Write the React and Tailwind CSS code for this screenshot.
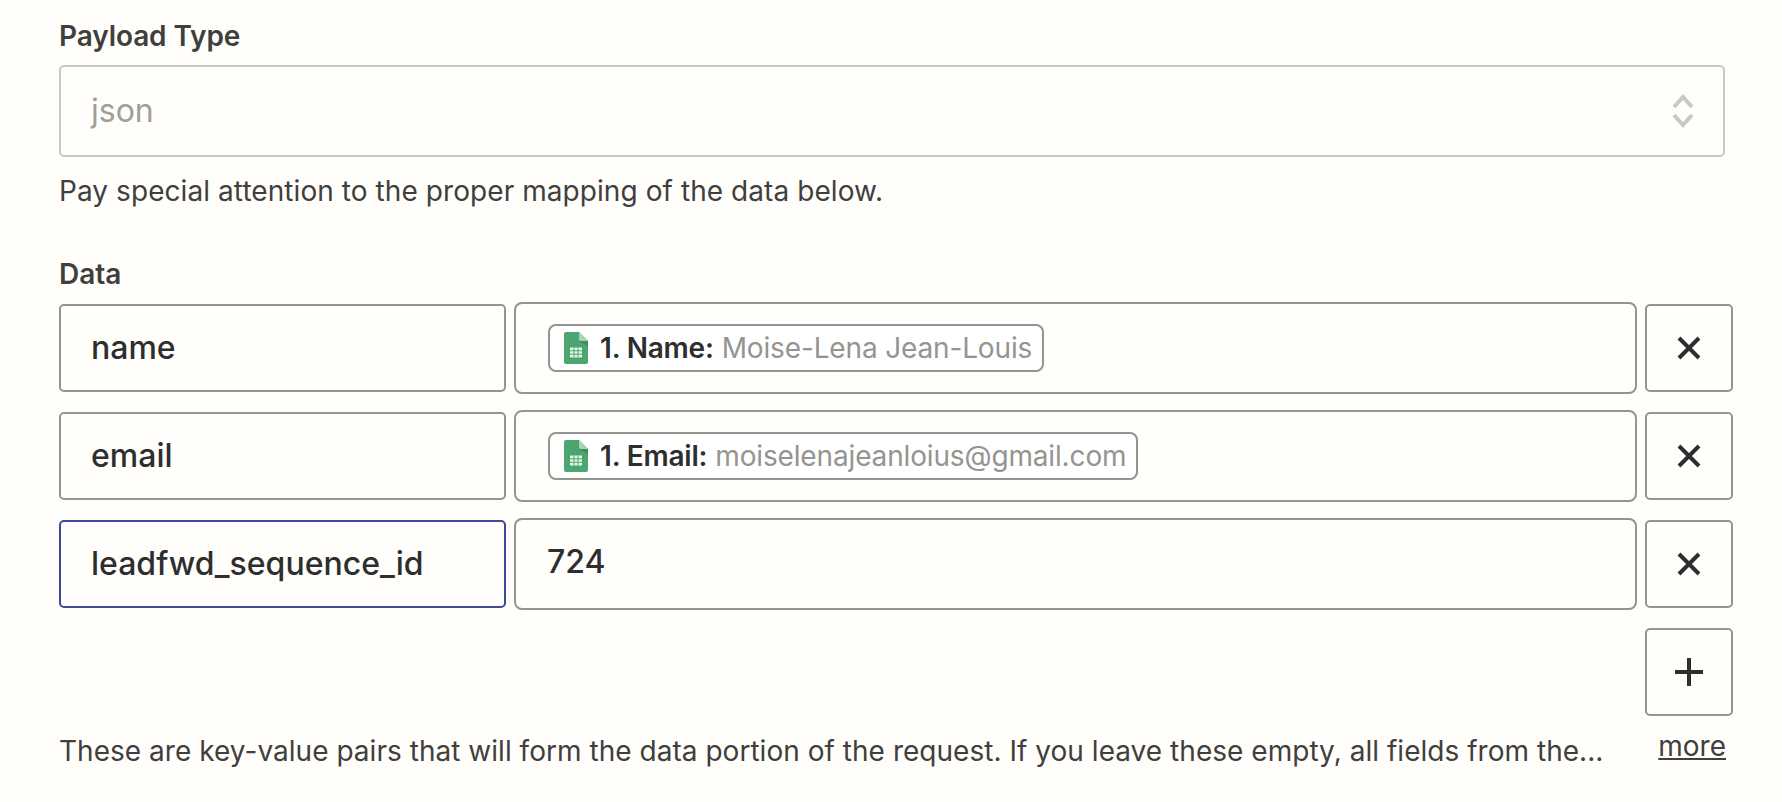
const font = { fontFamily: "Inter, 'Noto Sans', sans-serif" };

function SheetIcon() {
  return (
    <svg width="24" height="32" viewBox="0 0 24 32" className="shrink-0">
      <path d="M2 0H15L24 9V30a2 2 0 0 1-2 2H2a2 2 0 0 1-2-2V2a2 2 0 0 1 2-2Z" fill="#4ba56f" />
      <path d="M15 0L24 9H17a2 2 0 0 1-2-2Z" fill="#a3d5b6" />
      <path d="M15 9L24 14V9Z" fill="#3c8f5d" />
      <path d="M6 15.5H18V25.5H6Z" fill="#eaf5ee" />
      <path d="M6 18.8H18M6 22.2H18M10 15.5V25.5M14 15.5V25.5" stroke="#4ba56f" strokeWidth="1" />
    </svg>
  );
}

function Chip({ label, value }) {
  return (
    <div className="-ml-[0px] flex h-[48px] items-center rounded-[8px] border-2 border-[#95948f] bg-white pl-[14px] pr-[10px]">
      <SheetIcon />
      <span className="ml-[12px] text-[28px] font-semibold tracking-[-0.2px] text-[#2d2e2e]">{label}</span>
      <span className="ml-[8px] text-[28px] tracking-[-0.15px] text-[#95948f]">{value}</span>
    </div>
  );
}

function KeyBox({ text, active }) {
  return (
    <div className={`flex h-[88px] w-[447px] shrink-0 items-center rounded-[5px] border-2 pl-[30px] text-[32px] font-medium text-[#2d2e2e] ${active ? "border-[#3b4a9b]" : "border-[#95948f]"}`}>
      {text}
    </div>
  );
}

function IconBtn({ children }) {
  return (
    <div className="flex h-[88px] w-[88px] shrink-0 items-center justify-center rounded-[5px] border-2 border-[#95948f] text-[#2d2e2e]">
      {children}
    </div>
  );
}

const X = () => (
  <svg width="24" height="24" viewBox="0 0 24 24"><path d="M2 2L22 22M22 2L2 22" stroke="#2d2e2e" strokeWidth="4" /></svg>
);
const Plus = () => (
  <svg width="28" height="28" viewBox="0 0 28 28"><path d="M0 14H28M14 0V28" stroke="#2d2e2e" strokeWidth="4" /></svg>
);

function Row({ keyText, active, children, mt, pad }) {
  return (
    <div className={`flex items-center gap-[8px] ${mt}`}>
      <KeyBox text={keyText} active={active} />
      <div className={`flex h-[92px] w-[1123px] shrink-0 items-center rounded-[8px] border-2 border-[#95948f] ${pad}`}>
        {children}
      </div>
      <IconBtn><X /></IconBtn>
    </div>
  );
}

export default function App() {
  return (
    <div style={font} className="h-[802px] w-[1782px] overflow-hidden bg-[#fffefb] pl-[59px] pt-[18px] text-[#403f3e]">
      <div className="text-[28px] font-semibold leading-[36px] tracking-[-0.1px]">Payload Type</div>
      <div className="mt-[11px] flex h-[92px] w-[1666px] items-center justify-between rounded-[5px] border-2 border-[#c9c8c3] pl-[30px] pr-[29px] text-[32px] text-[#a09f9a]">
        <span>json</span>
        <svg width="22" height="36" viewBox="0 0 22 36" fill="none">
          <path d="M2 14L11 4L20 14M2 22L11 32L20 22" stroke="#c9c8c3" strokeWidth="4" />
        </svg>
      </div>
      <div className="mt-[15px] text-[28px] leading-[38px] tracking-[0.07px]">Pay special attention to the proper mapping of the data below.</div>
      <div className="mt-[46px] text-[28px] font-semibold leading-[36px]">Data</div>
      <div className="mt-[10px]">
        <Row keyText="name" pad="pl-[32px]"><Chip label="1. Name:" value="Moise-Lena Jean-Louis" /></Row>
        <Row keyText="email" pad="pl-[32px]" mt="mt-[16px]"><Chip label="1. Email:" value="moiselenajeanloius@gmail.com" /></Row>
        <Row keyText="leadfwd_sequence_id" active pad="pl-[31px]" mt="mt-[16px]"><span className="-mt-[4px] text-[32px] font-medium text-[#2d2e2e]">724</span></Row>
      </div>
      <div className="mt-[18px] flex w-[1674px] justify-end"><IconBtn><Plus /></IconBtn></div>
      <div className="flex w-[1667px] items-start justify-between">
        <span className="mt-[17px] text-[28px] leading-[36px] tracking-[0.03px]">These are key-value pairs that will form the data portion of the request. If you leave these empty, all fields from the...</span>
        <span className="mt-[12px] text-[28px] leading-[36px] underline">more</span>
      </div>
    </div>
  );
}
